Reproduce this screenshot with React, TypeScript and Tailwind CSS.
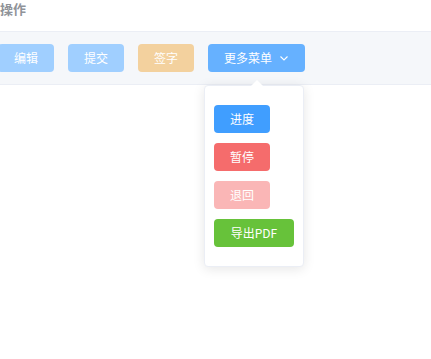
import React from 'react';

const btn =
  'h-7 rounded-[4px] text-xs text-white flex items-center justify-center shrink-0';

export default function App() {
  return (
    <div
      className="relative w-[431px] h-[359px] bg-white overflow-hidden"
      style={{ fontFamily: '"Noto Sans CJK SC", "Noto Sans", sans-serif' }}
    >
      <div className="h-[31px] pt-[1px] text-[13px] font-bold text-[#909399] leading-[14px]">
        <span className="block mt-[1px]">操作</span>
      </div>
      <div className="h-[54px] bg-[#f5f7fa] border-y border-[#ebeef5] flex items-center gap-[14px] pl-[-2px]">
        <button className={`${btn} w-14 bg-[#a0cfff] -ml-[2px]`}>编辑</button>
        <button className={`${btn} w-14 bg-[#a0cfff]`}>提交</button>
        <button className={`${btn} w-14 bg-[#f3d19e]`}>签字</button>
        <button className={`${btn} w-[97px] bg-[#66b1ff] gap-[7px]`}>
          更多菜单
          <svg width="10" height="10" viewBox="0 0 10 10" fill="none">
            <path d="M1.5 3.5 L5 7 L8.5 3.5" stroke="white" strokeWidth="1.1" />
          </svg>
        </button>
      </div>

      {/* dropdown popper */}
      <div className="absolute left-[204px] top-[85px] w-[100px] bg-white rounded-[4px] border border-[#ebeef5] shadow-[0_2px_12px_0_rgba(0,0,0,0.1)] py-[19px] px-[9px] flex flex-col items-start gap-[10px]">
        <div className="absolute -top-[6px] left-[46px] w-0 h-0 border-x-[6px] border-x-transparent border-b-[6px] border-b-white" />
        <button className={`${btn} w-14 bg-[#409eff]`}>进度</button>
        <button className={`${btn} w-14 bg-[#f56c6c]`}>暂停</button>
        <button className={`${btn} w-14 bg-[#fab6b6]`}>退回</button>
        <button className={`${btn} w-20 bg-[#67c23a]`}>导出PDF</button>
      </div>
    </div>
  );
}
